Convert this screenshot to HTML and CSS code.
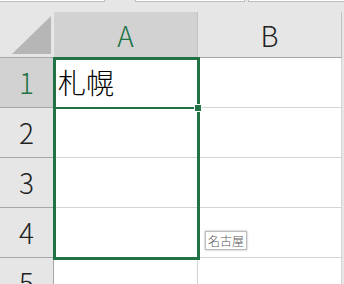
FILE: index.html
```html
<!DOCTYPE html>
<html lang="ja">
<head>
  <meta charset="UTF-8" />
  <title>Sheet</title>
  <link rel="stylesheet" href="styles.css">
</head>
<body>

  <div class="tabs">
    <div class="tab tab-1"></div>
    <div class="tab tab-2"></div>
    <div class="tab tab-3"></div>
  </div>

  <div class="sheet">
    <div class="corner"><div class="triangle"></div></div>
    <div class="col-head active">A</div>
    <div class="col-head">B</div>
    <div class="edge"></div>

    <div class="row-head active">1</div>
    <div class="cell">札幌</div>
    <div class="cell"></div>
    <div class="edge"></div>

    <div class="row-head">2</div>
    <div class="cell"></div>
    <div class="cell"></div>
    <div class="edge"></div>

    <div class="row-head">3</div>
    <div class="cell"></div>
    <div class="cell"></div>
    <div class="edge"></div>

    <div class="row-head">4</div>
    <div class="cell"></div>
    <div class="cell"></div>
    <div class="edge"></div>

    <div class="row-head">5</div>
    <div class="cell"></div>
    <div class="cell"></div>
    <div class="edge"></div>

    <!-- selection overlay -->
    <div class="selection"></div>
    <div class="active-line"></div>
    <div class="handle"></div>
    <div class="hint">名古屋</div>
  </div>

</body>
</html>
```

FILE: styles.css
```css
* {
  box-sizing: border-box;
}
body {
  margin: 0;
  background-color: #e6e6e6;
  font-family: "Noto Sans CJK JP", "Noto Sans", sans-serif;
  font-weight: 300;
  overflow: hidden;
}
.tabs {
  display: flex;
  height: 12px;
}
.tab {
  height: 2px;
  background-color: #ffffff;
  border: 1px solid #bdbdbd;
  border-top: none;
}
.tab-1 {
  width: 105px;
  border-left: none;
}
.tab-2 {
  width: 110px;
  margin-left: 30px;
}
.tab-3 {
  flex: 1;
  margin-left: 3px;
  border-right: none;
}
.sheet {
  position: relative;
  display: grid;
  grid-template-columns: 54px 144px 144px 2px;
  grid-template-rows: 46px repeat(5, 50px);
}
.corner {
  position: relative;
  background-color: #e6e6e6;
  border-right: 1px solid #e9e9e9;
  border-bottom: 1px solid #a6a6a6;
}
.triangle {
  position: absolute;
  right: 2px;
  bottom: 3px;
  width: 0;
  height: 0;
  border-left: 39px solid transparent;
  border-bottom: 38px solid #b6b6b6;
}
.col-head {
  background-color: #e6e6e6;
  border-right: 1px solid #c2c2c2;
  border-bottom: 1px solid #a6a6a6;
  font-size: 28px;
  line-height: 46px;
  text-align: center;
  color: #222222;
}
.col-head.active {
  background-color: #d2d2d2;
  color: #217346;
}
.row-head {
  background-color: #e6e6e6;
  border-right: 1px solid #a6a6a6;
  border-bottom: 1px solid #a6a6a6;
  font-size: 28px;
  line-height: 48px;
  text-align: center;
  color: #222222;
}
.row-head.active {
  background-color: #d2d2d2;
  color: #217346;
}
.cell {
  background-color: #ffffff;
  border-right: 1px solid #d4d4d4;
  border-bottom: 1px solid #d4d4d4;
  font-size: 28px;
  line-height: 48px;
  padding-left: 4px;
  color: #000000;
}
.edge {
  background-color: #e6e6e6;
}
.selection {
  position: absolute;
  left: 53px;
  top: 45px;
  width: 147px;
  height: 203px;
  border: 3px solid #217346;
}
.active-line {
  position: absolute;
  left: 56px;
  top: 95px;
  width: 142px;
  height: 2px;
  background-color: #217346;
}
.handle {
  position: absolute;
  left: 195px;
  top: 93px;
  width: 6px;
  height: 6px;
  background-color: #217346;
  outline: 1px solid #ffffff;
}
.hint {
  position: absolute;
  left: 205px;
  top: 219px;
  height: 19px;
  padding: 0 2px;
  background-color: #ffffff;
  border: 1px solid #bcbcbc;
  box-shadow: 0 0 2px rgba(0, 0, 0, 0.35);
  font-size: 12px;
  line-height: 17px;
  color: #555555;
}
```
